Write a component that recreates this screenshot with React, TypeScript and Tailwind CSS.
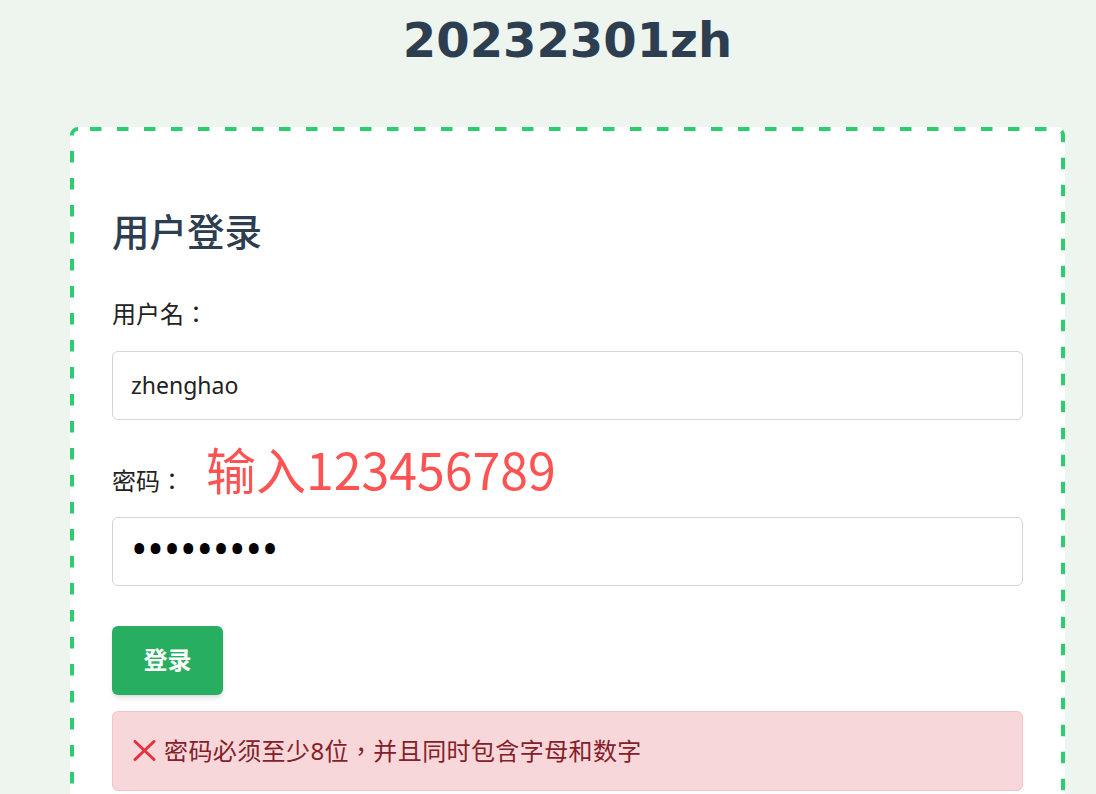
import React from 'react';

const tc = "font-['Noto_Sans','Noto_Sans_CJK_TC',sans-serif]";

function CrossIcon() {
  return (
    <svg width="23" height="21" viewBox="0 0 23 21" className="shrink-0">
      <path d="M2 1.5 L21 19.5 M21 1.5 L2 19.5" stroke="#e3323f" strokeWidth="3" strokeLinecap="round" />
    </svg>
  );
}

// dashed outline drawn over the card edge (long dashes, wide gaps)
function DashedOutline() {
  return (
    <svg className="pointer-events-none absolute inset-[2px] h-[calc(100%-4px)] w-[calc(100%-4px)] overflow-visible">
      <rect
        x="0"
        y="0"
        width="100%"
        height="100%"
        rx="6"
        fill="none"
        stroke="#2ecc71"
        strokeWidth="4"
        strokeDasharray="11.5 15.5"
        strokeDashoffset="-12"
      />
    </svg>
  );
}

export default function App() {
  return (
    <div className={`min-h-screen bg-[#eef5ef] pl-[70px] pr-[31px] ${tc}`}>
      <h1 className="pt-[16px] text-center text-[48px] leading-none font-bold text-[#2c3e50] font-['DejaVu_Sans',sans-serif]">
        20232301zh
      </h1>

      <div className="relative mt-[63px] rounded-lg bg-white px-[42px] pt-[86px] pb-10">
        <DashedOutline />
        <h2 className="text-[37.5px] leading-none font-medium text-[#2c3e50]">用户登录</h2>

        <form className="mt-[51px] flex flex-col" onSubmit={(e) => e.preventDefault()}>
          <label className="h-6 text-[24px] leading-none text-[#222]">用户名：</label>
          <input
            type="text"
            defaultValue="zhenghao"
            className="mt-[25px] h-[69px] w-full rounded-md border border-[#d4d4d4] px-[18px] text-[23px] text-[#222] outline-none font-['Noto_Sans',sans-serif]"
          />

          <div className="mt-[49px] flex h-6 items-end">
            <label className="text-[24px] leading-none text-[#222]">密码：</label>
            <span className="ml-[22px] text-[50px] leading-none text-[#fd5352] font-['Noto_Sans_CJK_SC',sans-serif]">
              输入123456789
            </span>
          </div>
          <input
            type="password"
            defaultValue="123456789"
            className="mt-[24px] h-[69px] w-full rounded-md border border-[#d4d4d4] px-[18px] pb-[6px] text-[44px] tracking-[-0.2px] text-black outline-none font-['Noto_Sans',sans-serif]"
          />

          <button
            type="submit"
            className="mt-[40px] h-[69px] w-[111px] rounded-md bg-[#27ae60] text-[24px] font-semibold text-white shadow-md"
          >
            登录
          </button>

          <div className="mt-4 flex items-center gap-[8px] rounded-md border border-[#f5c2c7] bg-[#f8d7da] px-5 py-[27px] text-[24px] leading-none tracking-[0.4px] text-[#842029]">
            <CrossIcon />
            <span>密码必须至少8位，并且同时包含字母和数字</span>
          </div>
        </form>
      </div>
    </div>
  );
}
